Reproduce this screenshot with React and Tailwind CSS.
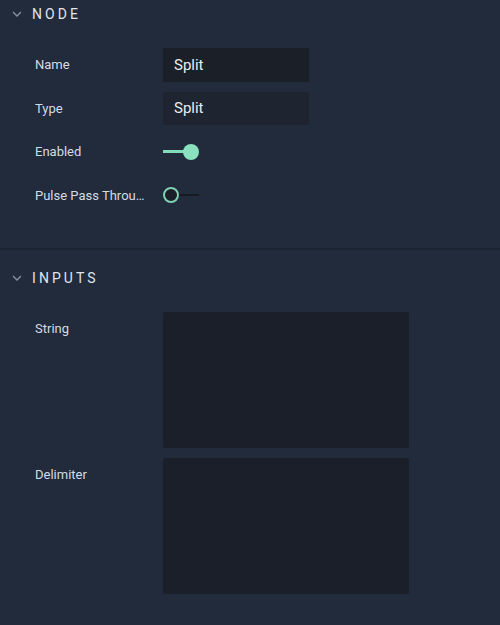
import React from "react";

function Chevron() {
  return (
    <svg width="10" height="6" viewBox="0 0 10 6" className="shrink-0">
      <path d="M1 1 L5 5 L9 1" fill="none" stroke="#8a93a1" strokeWidth="1.3" />
    </svg>
  );
}

function Header({ title }) {
  return (
    <div className="flex items-center h-[28px] pl-[12px]">
      <Chevron />
      <span className="ml-[10px] text-[14px] tracking-[0.22em] text-[#dfe5ee] leading-none">{title}</span>
    </div>
  );
}

function Row({ label, children }) {
  return (
    <div className="flex items-center h-[43.5px]">
      <div className="w-[163px] shrink-0 pl-[35px] pr-[10px] text-[13px] text-[#d4dbe6] whitespace-nowrap">{label}</div>
      {children}
    </div>
  );
}

export default function App() {
  return (
    <div className="w-[500px] h-[625px] bg-[#212b3b] overflow-hidden" style={{ fontFamily: "Roboto, 'Noto Sans', sans-serif" }}>
      <div className="h-[248px]">
        <Header title="NODE" />
        <div className="pt-[15px]">
          <Row label="Name">
            <div className="w-[146px] h-[34px] bg-[#1b1f28] flex items-center pl-[11px] text-[15px] text-[#e8edf3]">Split</div>
          </Row>
          <Row label="Type">
            <div className="w-[146px] h-[33px] bg-[#1e2430] flex items-center pl-[11px] text-[15px] text-[#e8edf3]">Split</div>
          </Row>
          <Row label="Enabled">
            <div className="relative w-[37px] h-[16px] flex items-center">
              <div className="w-[24px] h-[3px] bg-[#82dbb9]" />
              <div className="absolute left-[20px] top-0 w-[16px] h-[16px] rounded-full bg-[#8ae0bf]" />
            </div>
          </Row>
          <Row label="Pulse Pass Throu…">
            <div className="relative w-[37px] h-[16px] flex items-center">
              <div className="absolute left-[14px] w-[22px] h-[2px] bg-[#161b22]" />
              <div className="absolute left-0 top-0 w-[16px] h-[16px] rounded-full bg-[#1b1f27] border-2 border-[#7fd1b1]" />
            </div>
          </Row>
        </div>
      </div>
      <div className="h-[2px] bg-[#1c2431]" />
      <div className="pt-[14px]">
        <Header title="INPUTS" />
        <div className="pt-[20px] flex flex-col gap-[10px]">
          <div className="flex">
            <div className="w-[163px] shrink-0 pl-[35px] h-[34px] flex items-center text-[13px] text-[#d4dbe6]">String</div>
            <div className="w-[246px] h-[136px] bg-[#1a1f29] rounded-[2px]" />
          </div>
          <div className="flex">
            <div className="w-[163px] shrink-0 pl-[35px] h-[34px] flex items-center text-[13px] text-[#d4dbe6]">Delimiter</div>
            <div className="w-[246px] h-[136px] bg-[#1a1f29] rounded-[2px]" />
          </div>
        </div>
      </div>
    </div>
  );
}
